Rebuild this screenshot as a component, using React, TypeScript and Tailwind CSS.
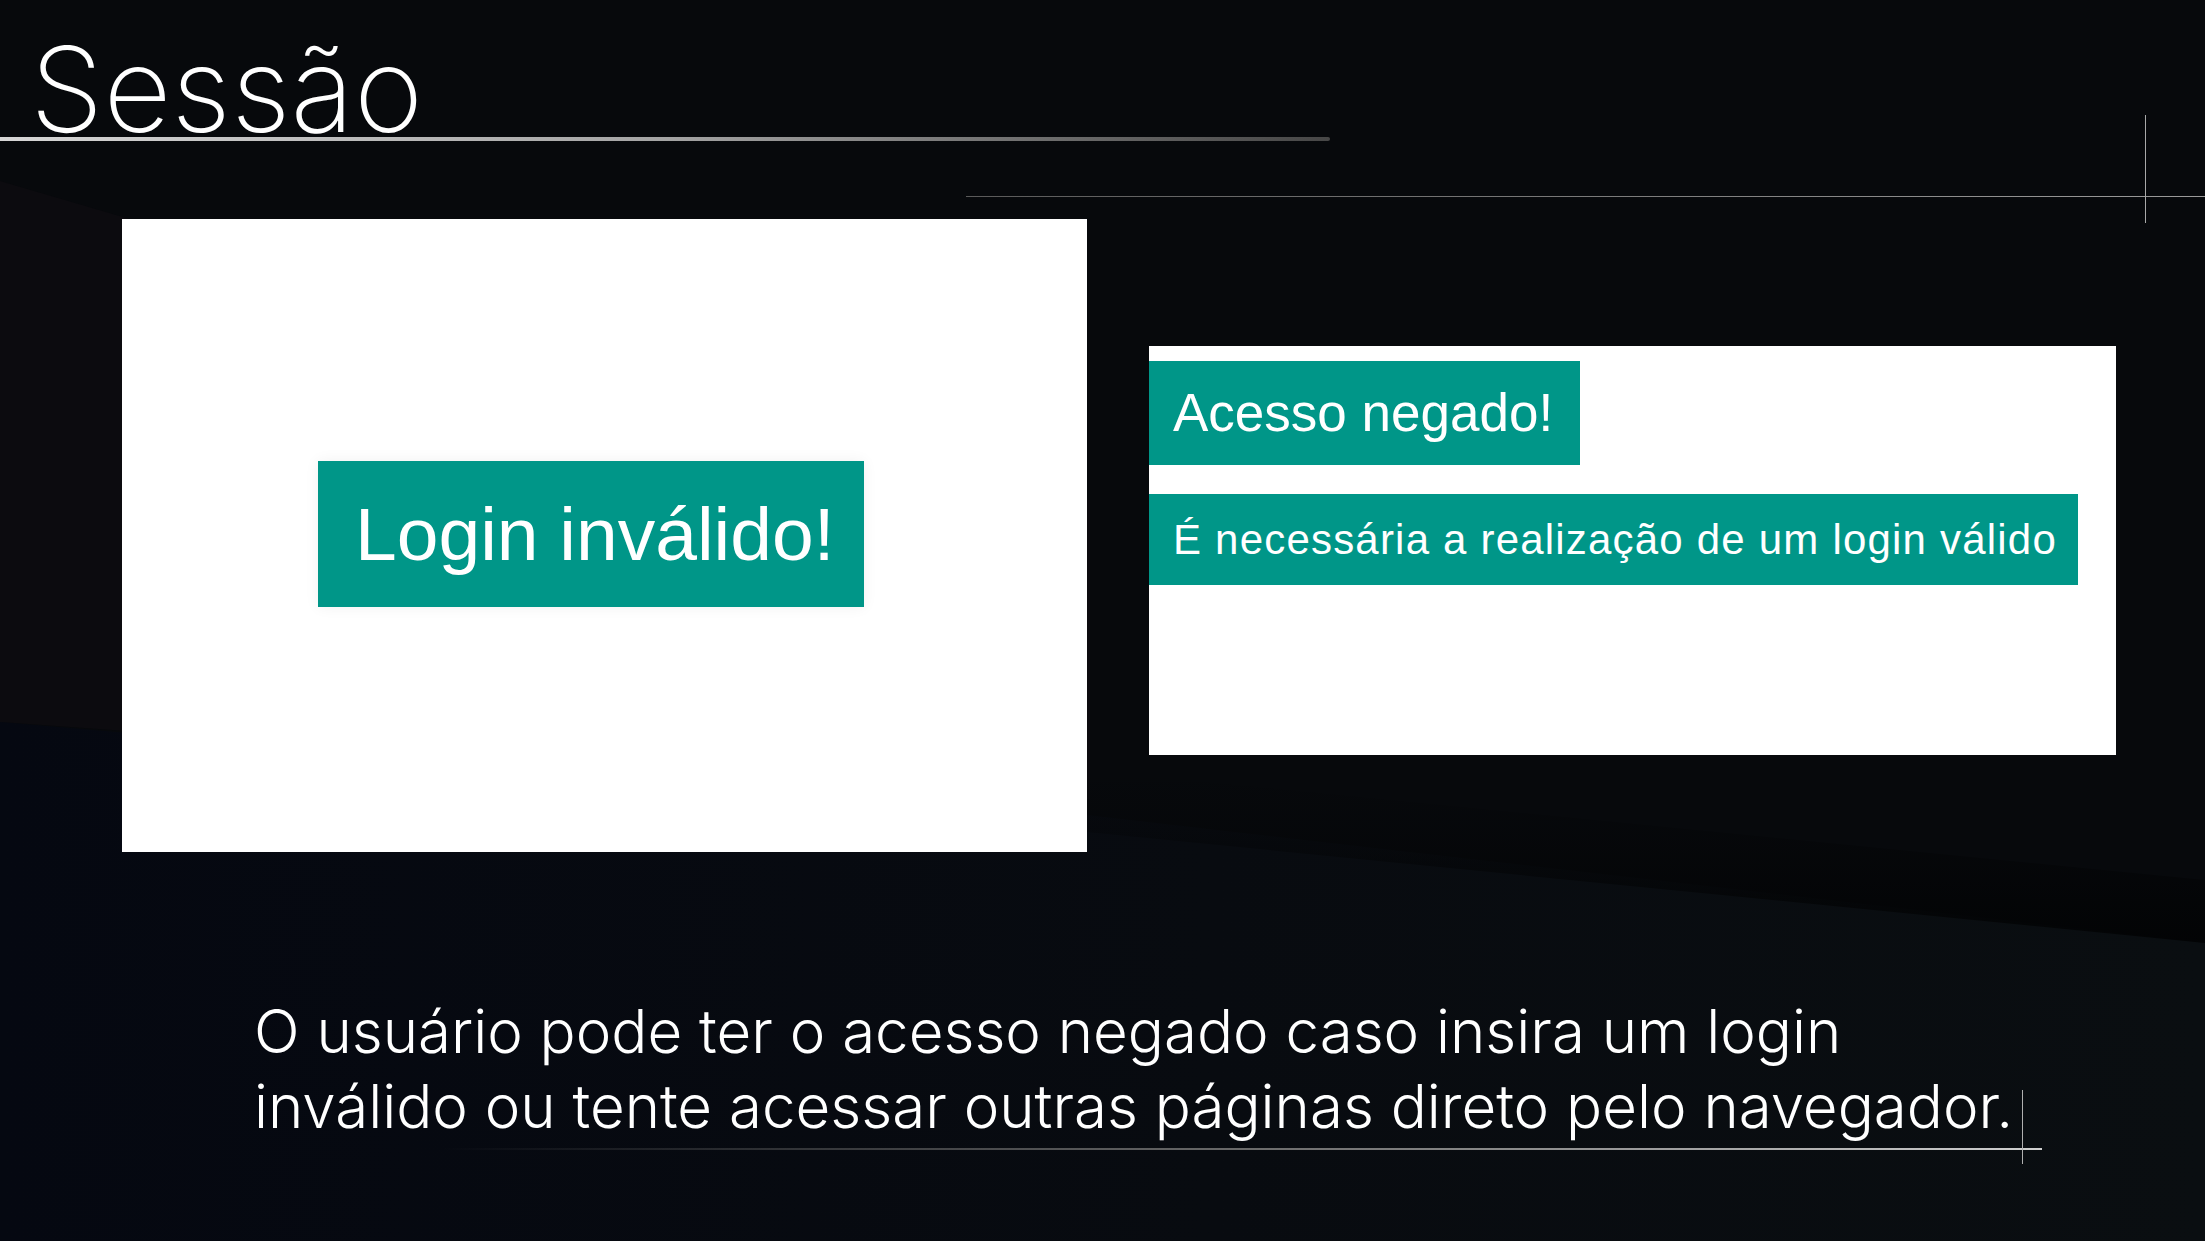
const Backdrop = () => (
  <svg
    className="absolute inset-0 h-full w-full"
    viewBox="0 0 2205 1241"
    preserveAspectRatio="none"
  >
    <defs>
      <linearGradient id="floor" x1="0" y1="0" x2="1" y2="0">
        <stop offset="0" stopColor="#050811" />
        <stop offset="0.55" stopColor="#080b10" />
        <stop offset="1" stopColor="#0a0e11" />
      </linearGradient>
      <linearGradient id="shade" x1="0" y1="0" x2="0" y2="1">
        <stop offset="0" stopColor="#040507" stopOpacity="0" />
        <stop offset="1" stopColor="#020304" stopOpacity="0.9" />
      </linearGradient>
    </defs>
    <rect width="2205" height="1241" fill="#07090c" />
    <polygon points="0,181 1090,500 1090,800 0,722" fill="#0c0b0f" />
    <polygon points="0,722 1087,815 2205,943 2205,1241 0,1241" fill="url(#floor)" />
    <polygon points="1087,770 2205,880 2205,943 1087,832" fill="url(#shade)" />
  </svg>
);

const Notice = ({ children, className }: { children: React.ReactNode; className: string }) => (
  <div
    className={
      "flex items-center bg-[#009688] text-white font-['Liberation_Sans',Arial,sans-serif] whitespace-nowrap " +
      className
    }
  >
    {children}
  </div>
);

export default function App() {
  return (
    <div className="relative h-[1241px] w-[2205px] overflow-hidden bg-[#07090c] text-white">
      <Backdrop />

      <div className="relative flex flex-col">
        <header className="pt-[42px]">
          <h1 className="pl-[30px] font-['Inter',sans-serif] text-[118px] font-extralight leading-[95px]">
            Sessão
          </h1>
          <div className="h-[4px] w-[1330px] rounded-r-full bg-linear-to-r from-[#d6d6d6] via-[#a4a4a4] to-[#474747]" />
        </header>

        <div className="ml-[966px] mt-[55px] h-px bg-linear-to-r from-[#5a5a5a] to-[#9a9a9a]" />

        <main className="mt-[22px] flex items-start gap-[62px] pl-[122px]">
          <section className="h-[633px] w-[965px] bg-white pl-[196px] pt-[242px]">
            <Notice className="h-[146px] w-[546px] px-[37px] text-[75px] shadow-[0_0_14px_rgba(0,0,0,0.06)]">
              Login inválido!
            </Notice>
          </section>

          <section className="mt-[127px] flex h-[409px] w-[967px] flex-col items-start gap-[29px] bg-white pt-[15px]">
            <Notice className="h-[104px] w-[431px] px-[24px] text-[53px]">Acesso negado!</Notice>
            <Notice className="h-[91px] w-[929px] px-[24px] text-[42px] tracking-[1.2px]">
              É necessária a realização de um login válido
            </Notice>
          </section>
        </main>

        <section className="mt-[142px] flex flex-col pl-[254px]">
          <p className="font-['Inter',sans-serif] text-[60px] font-light leading-[75px]">
            O usuário pode ter o acesso negado caso insira um login
            <br />
            inválido ou tente acessar outras páginas direto pelo navegador.
          </p>
          <div className="ml-[188px] mt-[4px] h-[2px] w-[1600px] bg-linear-to-r from-transparent via-[#6a6a6a] to-[#d0d0d0]" />
        </section>
      </div>

      <div className="absolute left-[2145px] top-[115px] h-[108px] w-px bg-[#a8a8a8]" />
      <div className="absolute left-[2022px] top-[1090px] h-[74px] w-px bg-[#b0b0b0]" />
    </div>
  );
}
